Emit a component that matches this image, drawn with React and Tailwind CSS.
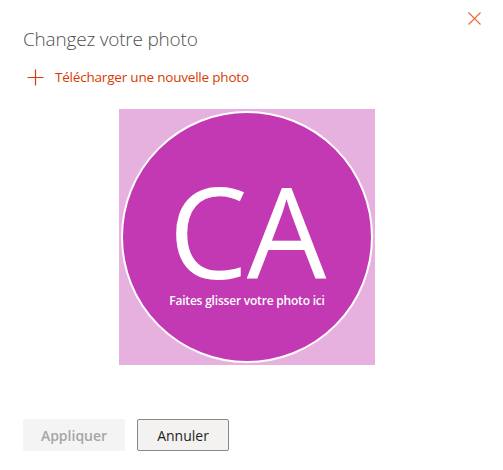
import React from 'react';

function Plus() {
  return (
    <svg width="17" height="17" viewBox="0 0 17 17" className="shrink-0">
      <path d="M8.5 0.5v16M0.5 8.5h16" stroke="#d83b01" strokeWidth="1.2" fill="none" />
    </svg>
  );
}

function Close() {
  return (
    <svg width="13" height="13" viewBox="0 0 13 13">
      <path d="M0.5 0.5l12 12M12.5 0.5l-12 12" stroke="#e8683a" strokeWidth="1.1" fill="none" />
    </svg>
  );
}

export default function App() {
  return (
    <div className="w-[503px] h-[470px] bg-white relative font-['Open_Sans',sans-serif]">
      <button className="absolute left-[468px] top-[12px]"><Close /></button>
      <div className="pt-[26px] pl-[23px]">
        <h1 className="text-[19px] font-light text-[#505050] leading-[26px] tracking-[-0.2px]">Changez votre photo</h1>
        <div className="flex items-center mt-[16px] pl-[4px] gap-[11px] text-[#d83b01] text-[13.5px] leading-[18px]">
          <Plus />
          <span className="tracking-[-0.2px]">Télécharger une nouvelle photo</span>
        </div>
      </div>
      <div className="ml-[119px] mt-[23px] w-[256px] h-[256px] bg-[#e6b0df] flex items-center justify-center">
        <div className="w-[252px] h-[252px] rounded-full bg-[#c239b3] border-2 border-white flex flex-col items-center text-white">
          <div className="text-[126px] leading-[100px] mt-[67px] tracking-[-1px]">CA</div>
          <div className="text-[12px] leading-[16px] font-semibold mt-[13px] tracking-[-0.2px]">Faites glisser votre photo ici</div>
        </div>
      </div>
      <div className="flex gap-[12px] pl-[23px] mt-[54px]">
        <button className="w-[102px] h-[32px] rounded-[2px] bg-[#f4f4f4] text-[#a6a6a6] text-[14px] font-semibold">Appliquer</button>
        <button className="w-[92px] h-[32px] rounded-[2px] bg-[#f3f2f1] border border-[#8a8886] text-[#201f1e] text-[14px]">Annuler</button>
      </div>
    </div>
  );
}
